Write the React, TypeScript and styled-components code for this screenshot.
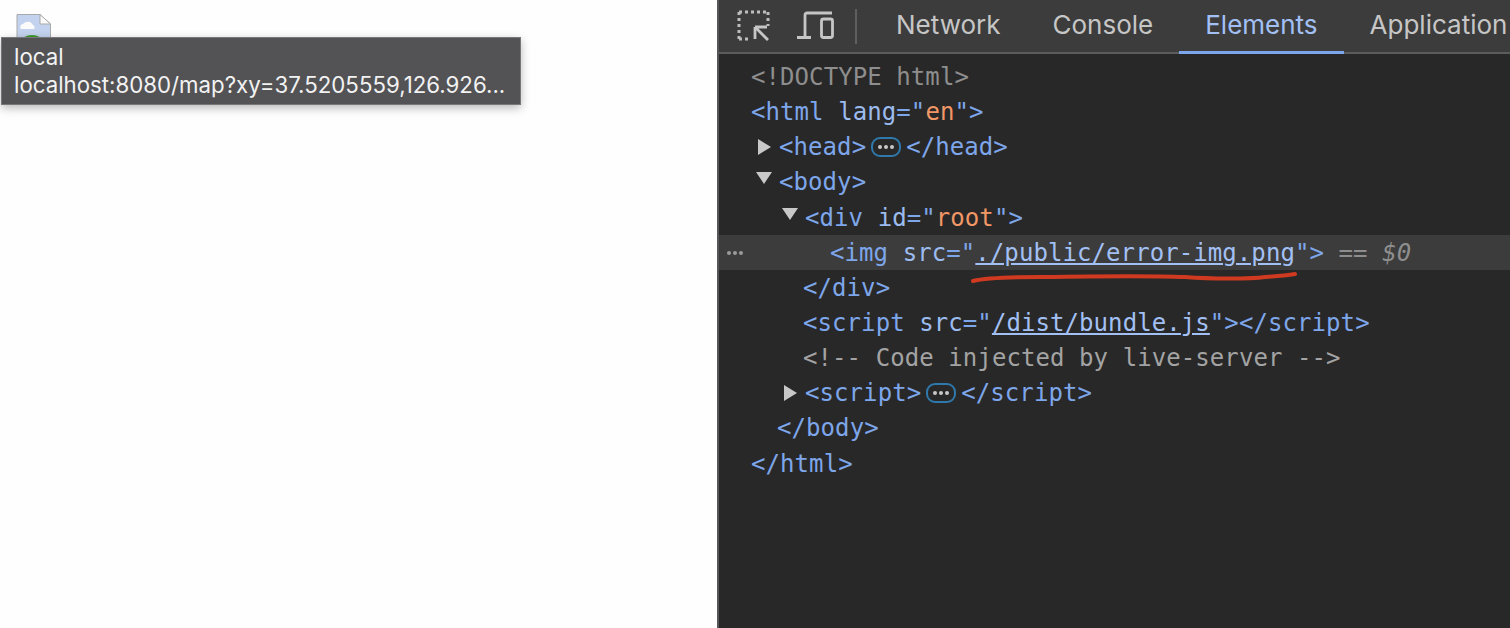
import styled, { createGlobalStyle } from "styled-components";

const GlobalStyle = createGlobalStyle`
  html, body {
    margin: 0;
    padding: 0;
    height: 100%;
    background: #ffffff;
  }
  #root {
    height: 100%;
  }
`;

const Page = styled.div`
  display: grid;
  grid-template-columns: 717px 1fr;
  width: 1510px;
  height: 628px;
  overflow: hidden;
`;

const Viewport = styled.div`
  position: relative;
  background: #fefefe;
  padding: 14px 0 0 16px;
`;

const BrokenImage = styled.svg`
  display: block;
  width: 35px;
  height: 24px;
`;

const Tooltip = styled.div`
  position: absolute;
  left: 1px;
  top: 37px;
  width: 520px;
  height: 68px;
  box-sizing: border-box;
  padding: 5px 12px;
  background: #535356;
  border: 1px solid #77777a;
  box-shadow: 0 3px 9px rgba(0, 0, 0, 0.28);
  color: #f2f2f2;
  font-family: Inter, "Liberation Sans", sans-serif;
  font-size: 22.25px;
  line-height: 28px;
  white-space: nowrap;
`;

const Devtools = styled.div`
  position: relative;
  display: flex;
  flex-direction: column;
  background: #282828;
  border-left: 2px solid #55565a;
`;

const Toolbar = styled.div`
  display: flex;
  align-items: center;
  height: 54px;
  flex: none;
  box-sizing: border-box;
  background: #3c3c3c;
  border-bottom: 2px solid #5c5c5c;
  padding-left: 18px;
`;

const ToolIcon = styled.svg<{ $gap: number }>`
  display: block;
  flex: none;
  margin-right: ${(p) => p.$gap}px;
`;

const Divider = styled.div`
  width: 2px;
  height: 35px;
  background: #5f5f5f;
  margin: 0 13px 0 20px;
  flex: none;
`;

const Tab = styled.div<{ $active?: boolean }>`
  position: relative;
  flex: none;
  height: 52px;
  line-height: 50px;
  padding: 0 26px;
  font-family: Inter, "Liberation Sans", sans-serif;
  font-size: 26px;
  color: ${(p) => (p.$active ? "#a3c0f5" : "#c6c6c6")};
  ${(p) =>
    p.$active &&
    `
    &::after {
      content: "";
      position: absolute;
      left: 0;
      right: 0;
      bottom: -2px;
      height: 3px;
      background: #7ca5ee;
    }
  `}
`;

const Tree = styled.div`
  padding-top: 5px;
  font-family: "DejaVu Sans Mono", "Liberation Mono", monospace;
  font-size: 24px;
  letter-spacing: 0.08px;
  color: #7ea6ea;
`;

const Row = styled.div<{ $indent: number; $selected?: boolean }>`
  position: relative;
  height: 35.15px;
  line-height: 37px;
  padding-left: ${(p) => p.$indent}px;
  white-space: pre;
  background: ${(p) => (p.$selected ? "#3c3c3c" : "transparent")};
`;

const Arrow = styled.span<{ $open?: boolean }>`
  position: absolute;
  top: ${(p) => (p.$open ? 8 : 10)}px;
  margin-left: ${(p) => (p.$open ? -23 : -21)}px;
  width: 0;
  height: 0;
  ${(p) =>
    p.$open
      ? `
    border-left: 8px solid transparent;
    border-right: 8px solid transparent;
    border-top: 12px solid #c8c8c8;
  `
      : `
    border-top: 8px solid transparent;
    border-bottom: 8px solid transparent;
    border-left: 13px solid #c8c8c8;
  `}
`;

const Gray = styled.span`
  color: #8e8e8e;
`;

const Comment = styled.span`
  color: #a3a3a3;
`;

const AttrName = styled.span`
  color: #9cbcf0;
`;

const AttrValue = styled.span`
  color: #f29766;
`;

const LinkValue = styled.span`
  color: #a3c0f5;
  text-decoration: underline;
`;

const Ellipsis = styled.span`
  position: relative;
  top: -1px;
  display: inline-flex;
  align-items: center;
  justify-content: center;
  gap: 2px;
  width: 30px;
  height: 20px;
  margin: 0 5px;
  box-sizing: border-box;
  border: 2px solid #2f78ac;
  border-radius: 9px;
  vertical-align: middle;

  & i {
    width: 4px;
    height: 4px;
    border-radius: 50%;
    background: #c8c8c8;
  }
`;

const RowDots = styled(Ellipsis)`
  position: absolute;
  left: 5px;
  top: 8px;
  margin: 0;
  border: none;
  width: 22px;

  & i {
    background: #9a9a9a;
  }
`;

const Marker = styled.svg`
  position: absolute;
  left: 252px;
  top: 270px;
  width: 330px;
  height: 18px;
`;

const Dots = () => (
  <>
    <i />
    <i />
    <i />
  </>
);

const App = () => {
  return (
    <Page>
      <GlobalStyle />
      <Viewport>
        <BrokenImage viewBox="0 0 35 24">
          <path d="M1 0.5H24L34.5 10V24H1Z" fill="#c3d2ee" stroke="#a9a9a9" />
          <path d="M24 0.5V10H34.5Z" fill="#fbfbfb" stroke="#a9a9a9" />
          <path d="M5 15a3 3 0 0 1 2-5a6 6 0 0 1 10 1a2.5 2.5 0 0 1 1 4Z" fill="#fbfbfb" />
          <ellipse cx="16" cy="24" rx="8" ry="3" fill="#3f9a2e" />
        </BrokenImage>
        <Tooltip>
          local
          <br />
          localhost:8080/map?xy=37.5205559,126.926...
        </Tooltip>
      </Viewport>
      <Devtools>
        <Toolbar>
          <ToolIcon $gap={26} width="34" height="34" viewBox="0 0 34 34" fill="none">
            <path
              d="M2 3h29M2 3v27M31 3v14M2 30h9"
              stroke="#bdbdbd"
              strokeWidth="3"
              strokeDasharray="3 3"
            />
            <path
              d="M18 18h12M18 18v12M18 18l13 13"
              stroke="#c6c6c6"
              strokeWidth="2.8"
            />
          </ToolIcon>
          <ToolIcon $gap={0} width="38" height="34" viewBox="0 0 38 34" fill="none">
            <path
              d="M8 28V6a2 2 0 0 1 2-2h25"
              stroke="#c6c6c6"
              strokeWidth="2.8"
            />
            <path d="M0 28.5h14" stroke="#c6c6c6" strokeWidth="3" />
            <rect
              x="24.5"
              y="10"
              width="11"
              height="18.5"
              rx="2"
              stroke="#c6c6c6"
              strokeWidth="2.8"
            />
          </ToolIcon>
          <Divider />
          <Tab>Network</Tab>
          <Tab>Console</Tab>
          <Tab $active>Elements</Tab>
          <Tab>Application</Tab>
        </Toolbar>
        <Tree>
          <Row $indent={32}>
            <Gray>{"<!DOCTYPE html>"}</Gray>
          </Row>
          <Row $indent={32}>
            {"<html "}
            <AttrName>lang</AttrName>
            {'="'}
            <AttrValue>en</AttrValue>
            {'">'}
          </Row>
          <Row $indent={60}>
            <Arrow />
            {"<head>"}
            <Ellipsis>
              <Dots />
            </Ellipsis>
            {"</head>"}
          </Row>
          <Row $indent={60}>
            <Arrow $open />
            {"<body>"}
          </Row>
          <Row $indent={86}>
            <Arrow $open />
            {"<div "}
            <AttrName>id</AttrName>
            {'="'}
            <AttrValue>root</AttrValue>
            {'">'}
          </Row>
          <Row $indent={111} $selected>
            <RowDots>
              <Dots />
            </RowDots>
            {"<img "}
            <AttrName>src</AttrName>
            {'="'}
            <LinkValue>./public/error-img.png</LinkValue>
            {'">'}
            <Gray>
              {" == "}
              <em>$0</em>
            </Gray>
          </Row>
          <Row $indent={84}>{"</div>"}</Row>
          <Row $indent={84}>
            {"<script "}
            <AttrName>src</AttrName>
            {'="'}
            <LinkValue>/dist/bundle.js</LinkValue>
            {'"></script>'}
          </Row>
          <Row $indent={84}>
            <Comment>{"<!-- Code injected by live-server -->"}</Comment>
          </Row>
          <Row $indent={86}>
            <Arrow />
            {"<script>"}
            <Ellipsis>
              <Dots />
            </Ellipsis>
            {"</script>"}
          </Row>
          <Row $indent={58}>{"</body>"}</Row>
          <Row $indent={32}>{"</html>"}</Row>
        </Tree>
        <Marker viewBox="0 0 330 18" fill="none">
          <path
            d="M2 11C14 8 34 7 70 7C130 6 190 6 214 7C240 9 280 9 294 7C310 6 318 5 324 4"
            stroke="#cf3a20"
            strokeWidth="4"
            strokeLinecap="round"
          />
        </Marker>
      </Devtools>
    </Page>
  );
};

export default App;
